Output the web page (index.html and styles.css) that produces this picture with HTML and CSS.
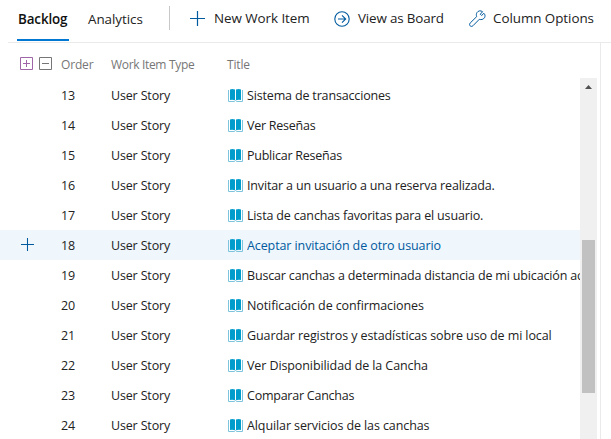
FILE: index.html
```html
<!DOCTYPE html>
<html lang="es">
<head>
<meta charset="utf-8">
<title>Backlog</title>
<link rel="stylesheet" href="styles.css">
</head>
<body>
<svg class="defs" width="0" height="0" aria-hidden="true">
  <symbol id="plus" viewBox="0 0 15 15"><path d="M7.5 0v15M0 7.5h15" fill="none" stroke="currentColor" stroke-width="1.2"/></symbol>
  <symbol id="book" viewBox="0 0 15 13">
    <path d="M2 .4Q4.500-.4 7 .6v10.700Q4.500 10.300 2 11zM8 .6q2.500-1 5-.2V11q-2.500-.7-5 .3z" fill="#009ccc"/>
    <path d="M.5 1v11.500H6.500L7.500 11.500 8.500 12.500h6V1" fill="none" stroke="#7fc4dd" stroke-width="1"/>
  </symbol>
</svg>
<header class="toolbar">
  <nav class="tabs">
    <a class="tab active"><span>Backlog</span></a>
    <a class="tab analytics"><span>Analytics</span></a>
  </nav>
  <i class="divider"></i>
  <a class="command new"><svg width="15" height="15"><use href="#plus"/></svg><span>New Work Item</span></a>
  <a class="command view"><svg width="16" height="16" viewBox="0 0 16 16" fill="none" stroke="currentColor" stroke-width="1.1"><circle cx="8" cy="8" r="7.200"/><path d="M4 8h7.500M8 4.300 11.700 8 8 11.700"/></svg><span>View as Board</span></a>
  <a class="command options"><svg width="17" height="17" viewBox="0 0 17 17" fill="none" stroke="currentColor" stroke-width="1" stroke-linejoin="round"><path d="M14.900 3.300 12.600 5.500 11.300 4.200 13.600 1.700C11.800.3 9.100.6 7.900 2.700 7.200 4 7.200 5.300 7.700 6.600L1.200 13C.3 14 .4 15.200 1.200 15.900 2.100 16.700 3.200 16.500 4 15.700L10.300 9.300C12.200 10 14.300 9.500 15.500 7.700 16.400 6.200 16.100 4.400 14.900 3.300z"/></svg><span>Column Options</span></a>
</header>
<main class="panel">
  <div class="columns">
    <span class="toggles">
      <svg width="13" height="13" viewBox="0 0 13 13"><path d="M.5.5h12v12H.5zM3 6.500h7M6.500 3v7"/></svg>
      <svg class="collapse" width="13" height="13" viewBox="0 0 13 13"><path d="M.5.5h12v12H.5zM3 6.500h7"/></svg>
    </span>
    <span>Order</span><span class="type">Work Item Type</span><span>Title</span>
  </div>
  <div class="grid">
    <div class="rows">
      <div class="row"><i></i><span>13</span><span>User Story</span><svg><use href="#book"/></svg><span class="title">Sistema de transacciones</span></div>
      <div class="row"><i></i><span>14</span><span>User Story</span><svg><use href="#book"/></svg><span class="title tight">Ver Reseñas</span></div>
      <div class="row"><i></i><span>15</span><span>User Story</span><svg><use href="#book"/></svg><span class="title tight">Publicar Reseñas</span></div>
      <div class="row"><i></i><span>16</span><span>User Story</span><svg><use href="#book"/></svg><span class="title">Invitar a un usuario a una reserva realizada.</span></div>
      <div class="row"><i></i><span>17</span><span>User Story</span><svg><use href="#book"/></svg><span class="title">Lista de canchas favoritas para el usuario.</span></div>
      <div class="row selected"><svg class="add"><use href="#plus"/></svg><span>18</span><span>User Story</span><svg><use href="#book"/></svg><span class="title loose">Aceptar invitación de otro usuario</span></div>
      <div class="row"><i></i><span>19</span><span>User Story</span><svg><use href="#book"/></svg><span class="title">Buscar canchas a determinada distancia de mi ubicación actual</span></div>
      <div class="row"><i></i><span>20</span><span>User Story</span><svg><use href="#book"/></svg><span class="title loose">Notificación de confirmaciones</span></div>
      <div class="row"><i></i><span>21</span><span>User Story</span><svg><use href="#book"/></svg><span class="title loose">Guardar registros y estadísticas sobre uso de mi local</span></div>
      <div class="row"><i></i><span>22</span><span>User Story</span><svg><use href="#book"/></svg><span class="title loose">Ver Disponibilidad de la Cancha</span></div>
      <div class="row"><i></i><span>23</span><span>User Story</span><svg><use href="#book"/></svg><span class="title tight">Comparar Canchas</span></div>
      <div class="row"><i></i><span>24</span><span>User Story</span><svg><use href="#book"/></svg><span class="title loose">Alquilar servicios de las canchas</span></div>
    </div>
    <div class="scrollbar"><svg width="7" height="4" viewBox="0 0 7 4"><path d="M3.500 0 7 4H0z"/></svg><i class="thumb"></i></div>
  </div>
</main>
</body>
</html>
```
FILE: styles.css
```css
* { box-sizing: border-box; }
body {
  margin: 0;
  height: 439px;
  overflow: hidden;
  background: #fff;
  color: #222;
  font: 12.5px/32px "Open Sans", "Noto Sans", sans-serif;
  letter-spacing: -.16px;
  white-space: nowrap;
}
svg { display: block; flex: none; }
.defs { position: absolute; }
.toolbar {
  display: flex;
  height: 43px;
  margin-left: 8px;
  border-bottom: 1px solid #eaeaea;
  font-size: 13.4px;
  line-height: 37px;
  letter-spacing: -.05px;
}
.tabs { display: flex; width: 161px; padding-left: 9px; }
.tab { height: 41px; padding: 1px 1px 0; }
.tab.active { width: 52px; border-bottom: 2px solid #0078d4; color: #111; font-weight: 600; }
.active span { letter-spacing: -.12px; }
.analytics { margin-left: 18px; }
.divider { width: 1px; height: 24px; margin-top: 6px; background: #c8c8c8; }
.command { display: flex; align-items: center; height: 37px; }
.command svg { color: #005a9e; }
.new { width: 144px; margin-left: 20px; gap: 9px; }
.view { width: 135px; gap: 8px; letter-spacing: -.15px; }
.options { gap: 7px; }
.panel {
  display: flex;
  flex-direction: column;
  width: 601px;
  height: 396px;
  border-right: 1px solid #eaeaea;
}
.columns {
  display: grid;
  grid-template-columns: 61px 50px 116px 1fr;
  height: 35px;
  padding-top: 6px;
  color: #767676;
  font-size: 12px;
}
.type { letter-spacing: -.33px; }
.toggles { display: flex; gap: 6px; padding: 8px 0 0 20px; }
.toggles path { fill: none; stroke: #a065a8; }
.toggles .collapse path { stroke: #767676; }
.grid { display: flex; height: 361px; }
.rows { width: 580px; padding-top: 2px; overflow: hidden; }
.row {
  display: grid;
  grid-template-columns: 61px 50px 117px 19px 1fr;
  grid-template-rows: 30px;
  height: 30px;
}
.row > svg { width: 15px; height: 13px; margin-top: 9px; }
.row > .add { width: 13px; height: 13px; margin: 8px 0 0 21px; color: #005a9e; }
.selected { background: #eff6fc; }
.selected .title { color: #005a9e; }
.title { overflow: hidden; }
.tight { letter-spacing: -.24px; }
.loose { letter-spacing: -.1px; }
.scrollbar { width: 17px; padding: 7px 2px 0; background: #f0f0f0; }
.scrollbar svg { margin-left: 3px; fill: #505050; }
.thumb { display: block; height: 153px; margin-top: 151px; background: #c1c1c1; }
```
